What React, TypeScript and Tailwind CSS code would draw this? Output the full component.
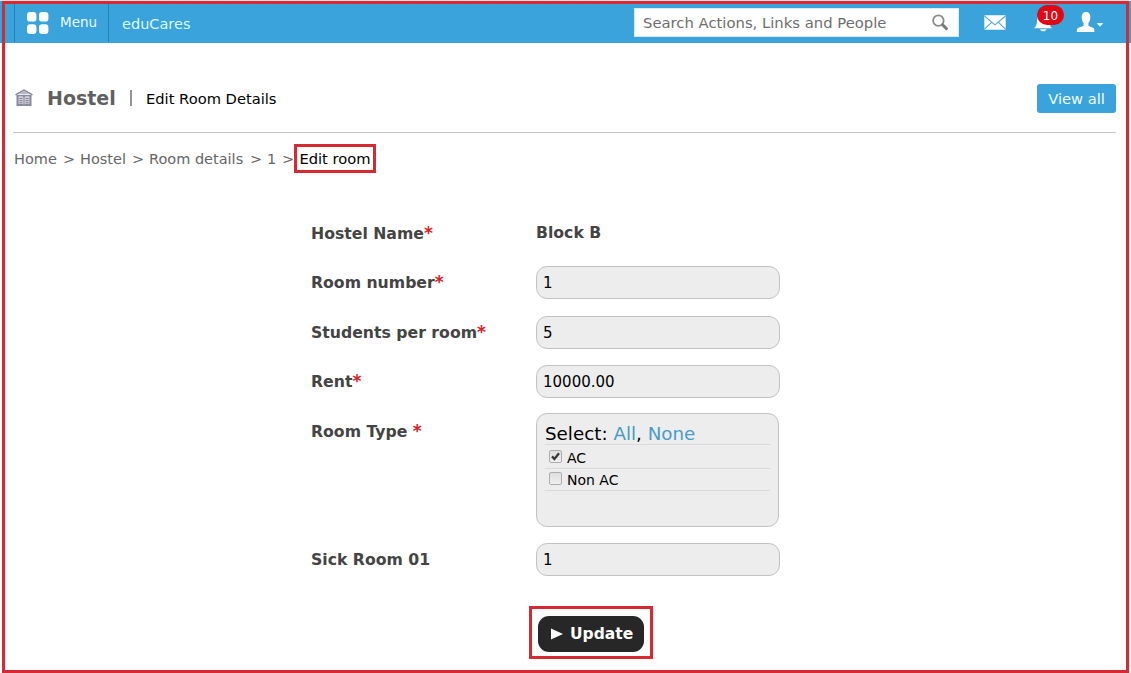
import React from 'react';

function Label({ text, required, gap }: { text: string; required?: boolean; gap?: boolean }) {
  return (
    <div className="w-[225px] shrink-0 text-[15.7px] leading-5 font-bold text-[#444444]">
      {text}
      {gap ? ' ' : ''}
      {required && <span className="text-[17px] leading-4 text-[#d92027]">*</span>}
    </div>
  );
}

function Field({ label, required, value }: { label: string; required?: boolean; value: string }) {
  return (
    <div className="flex h-[33px] items-center">
      <Label text={label} required={required} />
      <input
        defaultValue={value}
        className="h-[33px] w-[244px] rounded-[11px] border border-[#c2c2c2] bg-[#ededed] px-[6px] pt-[1px] text-[15px] text-black outline-none"
      />
    </div>
  );
}

function Option({ label, checked }: { label: string; checked?: boolean }) {
  return (
    <div className="flex h-full items-start border-b border-[#dadada] pl-[4px]">
      <svg width="13" height="13" viewBox="0 0 13 13" className={checked ? 'mt-[5px]' : 'mt-[3px]'}>
        <defs>
          <linearGradient id="box" x1="0" y1="0" x2="0" y2="1">
            <stop offset="0" stopColor="#dedede" />
            <stop offset="1" stopColor="#f0f0f0" />
          </linearGradient>
        </defs>
        <rect x="0.5" y="0.5" width="12" height="12" rx="1.5" fill="url(#box)" stroke="#adadad" />
        {checked && <path d="M3 6.4 5.4 9 10 3.2" fill="none" stroke="#383838" strokeWidth="2.3" />}
      </svg>
      <span className={checked ? 'ml-[5px] pt-[4px] text-[14px] leading-[18px]' : 'ml-[5px] pt-[2px] text-[14px] leading-[18px]'}>
        {label}
      </span>
    </div>
  );
}

export default function App() {
  return (
    <div className="relative flex h-[673px] w-[1131px] flex-col overflow-hidden bg-white font-['DejaVu_Sans',sans-serif]">
      <header className="flex h-[43px] shrink-0 bg-[#3aa3db] pt-[3px] pl-[14px]">
        <div className="flex h-[39px] w-[95px] border-r border-l border-r-[#277eb0] border-l-[#277eb0] pl-[12px]">
          <svg width="22" height="23" viewBox="0 0 22 23" fill="#fff" className="mt-[9px]">
            <rect x="0" y="0" width="9.4" height="9.6" rx="3.2" />
            <rect x="12" y="0" width="9.4" height="9.6" rx="3.2" />
            <rect x="0" y="12.2" width="9.4" height="9.8" rx="3.2" />
            <rect x="12" y="12.2" width="9.4" height="9.8" rx="3.2" />
          </svg>
          <span className="ml-[11px] pt-[9px] text-[13.5px] leading-5 text-[#e9fbff]">Menu</span>
        </div>
        <span className="ml-[13px] w-[511px] pt-[11px] text-[14.5px] leading-5 text-[#d9fbff]">eduCares</span>
        <div className="mt-[5px] ml-[1px] flex h-[29px] w-[325px] items-center border border-[#dbe9f2] bg-white pr-[9px] pl-[8px]">
          <span className="text-[14.8px] leading-5 whitespace-nowrap text-[#6e6e6e]">Search Actions, Links and People</span>
          <svg width="17" height="17" viewBox="0 0 17 17" fill="none" className="ml-auto">
            <circle cx="6.4" cy="6.6" r="5.3" stroke="#8a8a8a" strokeWidth="1.8" />
            <path d="M10.6 10.8 14.4 14.6" stroke="#7c7c7c" strokeWidth="3" strokeLinecap="round" />
          </svg>
        </div>
        <svg width="22" height="15" viewBox="0 0 22 15" className="mt-[12px] ml-[25px]">
          <rect x="0.3" y="0.3" width="21.4" height="14.4" rx="0.8" fill="#fff" />
          <path d="M0.5 1 11 9.8 21.5 1M0.5 14.2 7.8 7.2M21.5 14.2 14.2 7.2" fill="none" stroke="#56a9d2" strokeWidth="1.1" />
        </svg>
        <div className="relative ml-[28px] w-[30px]">
          <svg width="20" height="21" viewBox="0 0 20 21" fill="#fff" className="mt-[8px]">
            <path d="M0 17.200C2.600 15 3 12 3.100 9 3.400 4.500 6 2 9 2s5.700 2.500 6 7c.1 3 .6 6 3 8.200ZM6 18.200h6.500c-.6 1.500-1.800 2.100-3.200 2.100S6.600 19.700 6 18.200Z" />
          </svg>
          <span className="absolute top-[2px] left-[3px] flex h-[20px] w-[27px] items-center justify-center rounded-full bg-[#e30613] pt-[1px] text-[12px] text-white">10</span>
        </div>
        <svg width="29" height="22" viewBox="0 0 29 22" fill="#fff" className="mt-[8px] ml-[12px]">
          <path d="M10 1c3.100 0 4.300 2 4.300 5 0 2.700-.7 4.700-1.900 6v2.400c.4 1.400 5.400 1.500 5.800 3.800l.2 2.800H.800l.2-2.800c.4-2.300 6.200-2.400 6.600-3.800V12C6.400 10.700 5.700 8.700 5.700 6c0-3 1.200-5 4.300-5Z" />
          <path d="M20.500 12h7L24 15.800Z" fill="#d9f7ff" />
        </svg>
      </header>

      <main className="flex flex-col pr-[15px] pl-[13px]">
        <div className="flex h-[90px] border-b border-[#c6c6c6]">
          <svg width="20" height="20" viewBox="0 0 20 20" className="mt-[45px] ml-[1px]">
            <path d="M1.500 6.800 10 2 18.500 6.800" fill="none" stroke="#85859a" strokeWidth="1.500" />
            <path d="M4.500 6.200 10 3.200l5.500 3Z" fill="#b4b4c4" />
            <rect x="2.500" y="7" width="15" height="11" fill="#8a8a9e" />
            <path d="M4.500 8.500Q7.500 7.500 9.500 9v7.500Q7.500 15 4.500 16Zm11 0Q12.500 7.500 10.500 9v7.500q2-1.500 5-.5Z" fill="#cfcfda" />
            <path d="M5.300 10.500h3.200M5.300 12.500h3.200M5.300 14.300h3.200M11.500 10.500h3.200M11.500 12.500h3.200M11.500 14.300h3.200" stroke="#85859a" strokeWidth="0.9" />
          </svg>
          <h1 className="ml-[13px] w-[83px] pt-[43px] text-[19px] leading-6 font-bold text-[#606060]">Hostel</h1>
          <div className="mt-[47px] h-[16px] w-[2px] bg-[#929292]" />
          <span className="ml-[14px] pt-[46px] text-[14.700px] leading-5 text-black">Edit Room Details</span>
          <button className="mt-[41px] ml-auto h-[29px] w-[79px] rounded-[3px] bg-[#3aa3db] pt-[1px] text-[14.700px] leading-5 text-[#effcff]">View all</button>
        </div>

        <nav className="mt-[11px] flex h-[29px] items-center pl-px text-[14.500px] leading-5 whitespace-nowrap text-[#666666]">
          <span className="w-[49px]">Home</span>
          <span className="w-[17px]">&gt;</span>
          <span className="w-[52px]">Hostel</span>
          <span className="w-[17px]">&gt;</span>
          <span className="w-[101px]">Room details</span>
          <span className="w-[17px]">&gt;</span>
          <span className="w-[15px]">1</span>
          <span className="w-[17px]">&gt;</span>
          <span className="-ml-[5px] flex h-[29px] w-[82px] items-center justify-center border-[3px] border-[#d62931] text-[14.700px] text-black">Edit room</span>
        </nav>

        <form className="mt-[48px] ml-[298px] flex flex-col" onSubmit={(e) => e.preventDefault()}>
          <div className="flex h-[26px] items-center">
            <Label text="Hostel Name" required />
            <span className="pb-[2px] text-[15.700px] leading-5 font-bold text-[#444444]">Block B</span>
          </div>
          <div className="mt-[19px] flex flex-col">
            <Field label="Room number" required value="1" />
            <div className="mt-[17px]">
              <Field label="Students per room" required value="5" />
            </div>
            <div className="mt-[16px]">
              <Field label="Rent" required value="10000.00" />
            </div>
          </div>
          <div className="mt-[15px] flex h-[114px] items-start">
            <div className="pt-[9px]">
              <Label text="Room Type" required gap />
            </div>
            <div className="grid h-[114px] w-[243px] grid-rows-[31px_24px_22px] rounded-[11px] border border-[#c2c2c2] bg-[#ededed] px-[8px] text-black">
              <div className="border-b border-[#dadada] pt-[9px] text-[18.300px] leading-[22px] whitespace-nowrap">
                Select: <span className="text-[#4b9bc8]">All</span>, <span className="text-[#4b9bc8]">None</span>
              </div>
              <Option label="AC" checked />
              <Option label="Non AC" />
            </div>
          </div>
          <div className="mt-[16px]">
            <Field label="Sick Room 01" value="1" />
          </div>
          <div className="mt-[30px] ml-[218px] flex h-[53px] w-[124px] items-center justify-center border-[3px] border-[#d62931] pt-[2px]">
            <button className="flex h-[36px] w-[106px] items-center rounded-[11px] bg-[#272727] pl-[13px] text-white">
              <svg width="12" height="12" viewBox="0 0 12 12" fill="#fff">
                <path d="M0 .5 12 6 0 11.500Z" />
              </svg>
              <span className="ml-[7px] text-[15.500px] leading-5 font-bold">Update</span>
            </button>
          </div>
        </form>
      </main>

      <div className="pointer-events-none absolute inset-x-0 top-0 h-px bg-[#f3dfe2]" />
      <div className="pointer-events-none absolute top-[1px] right-[2px] bottom-0 left-[2px] border-[3px] border-[#d62931]" />
    </div>
  );
}
